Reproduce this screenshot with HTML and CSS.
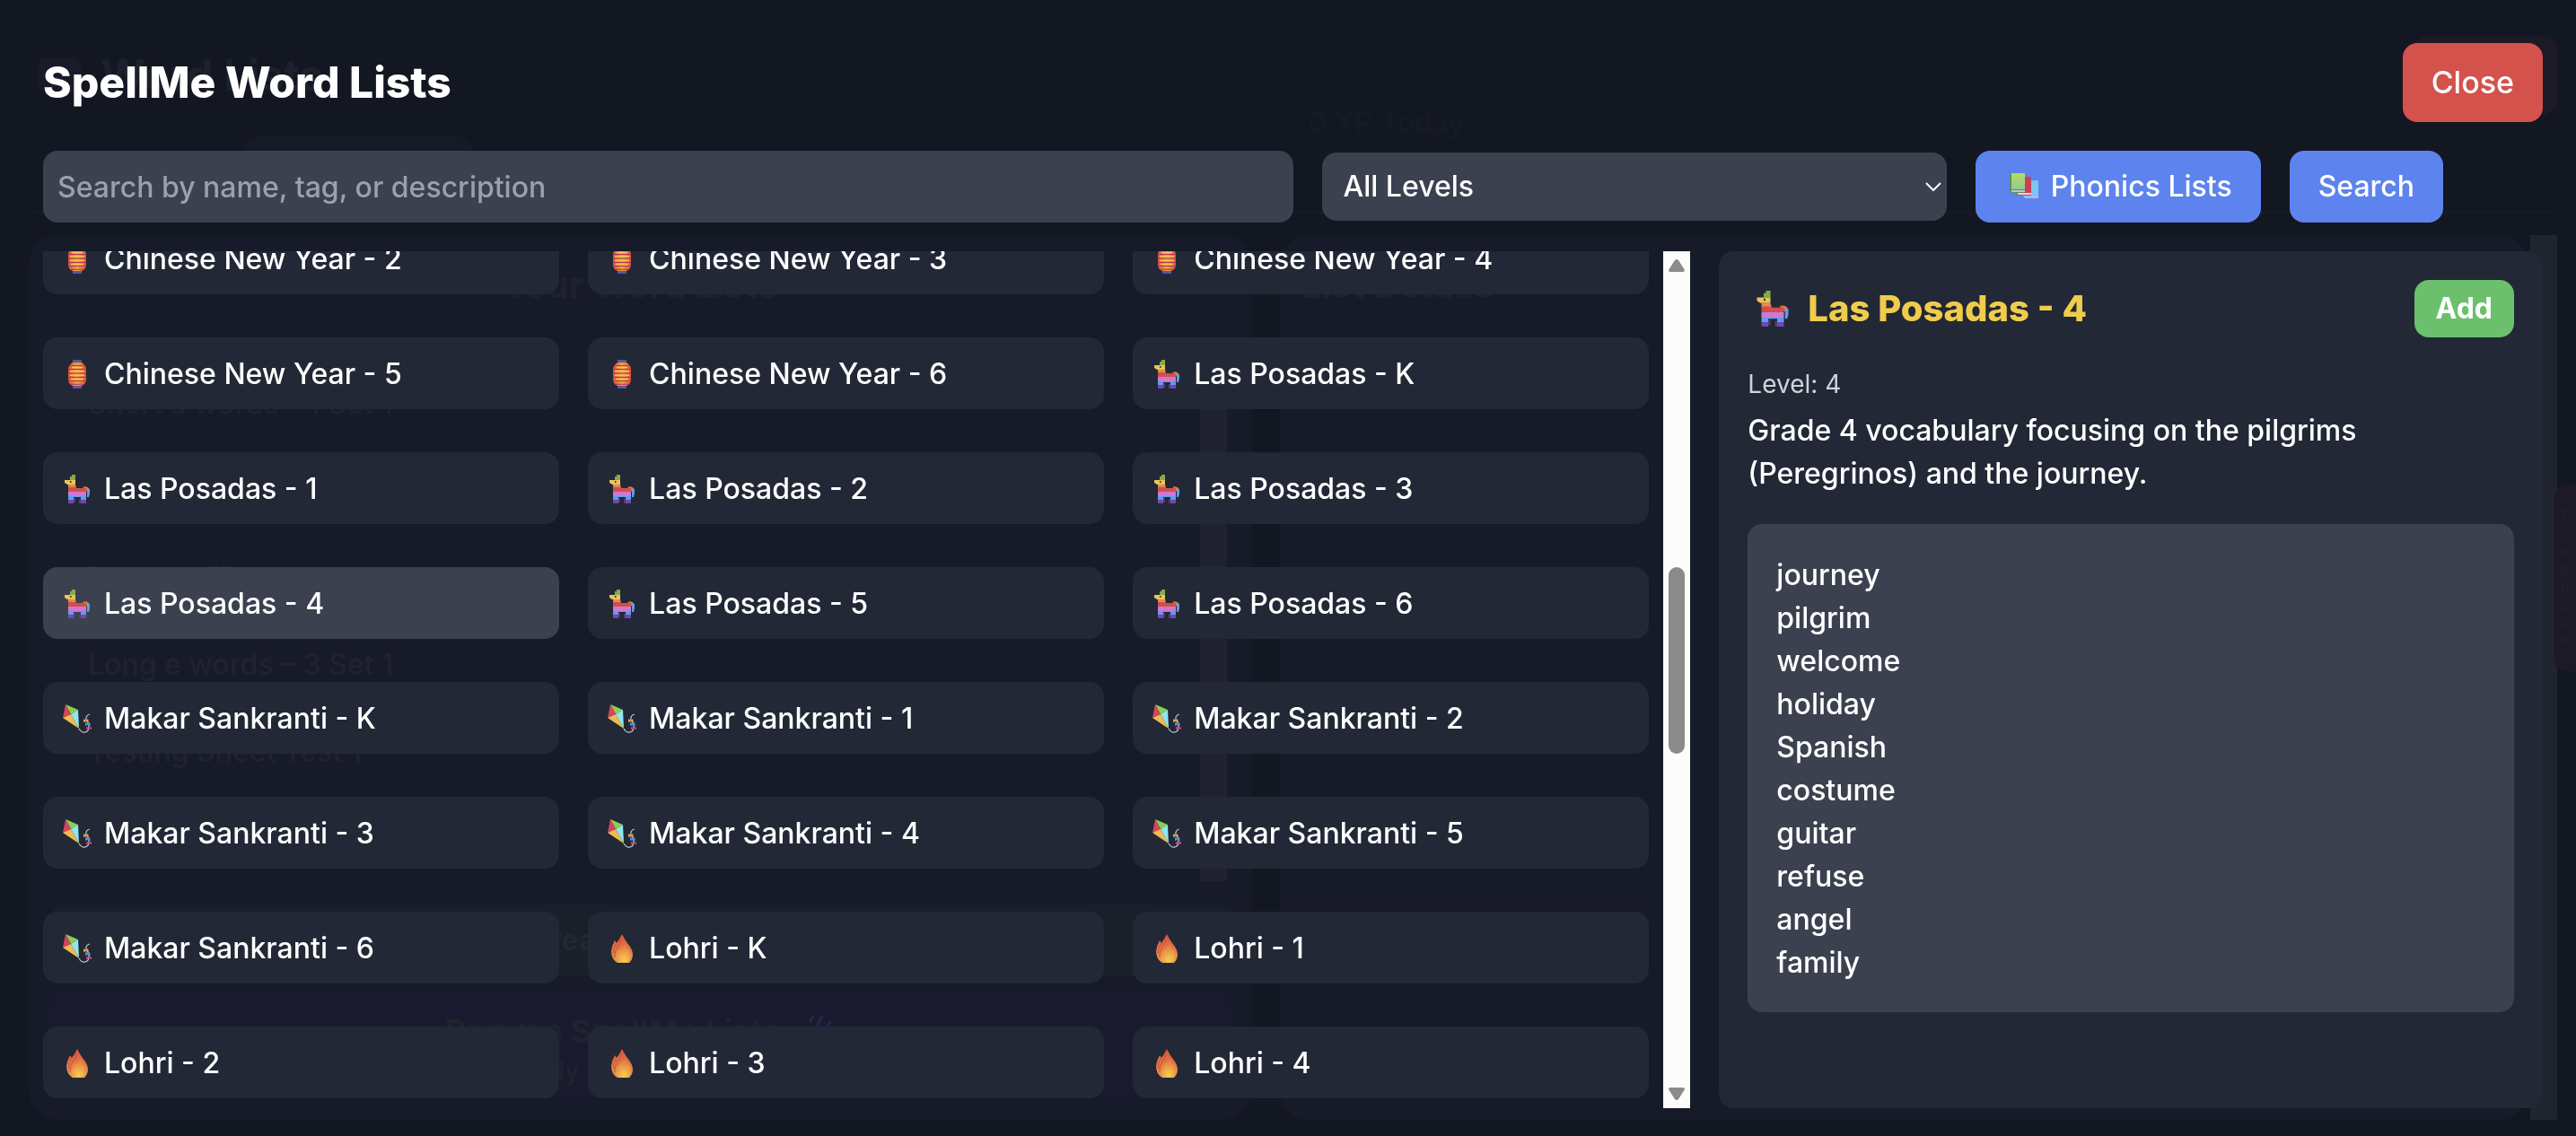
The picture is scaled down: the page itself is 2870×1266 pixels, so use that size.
FILE: index.html
```html
<!DOCTYPE html>
<html lang="en">
<head>
<meta charset="utf-8">
<meta name="viewport" content="width=device-width, initial-scale=1">
<title>SpellMe Word Lists</title>
<link rel="stylesheet" href="styles.css">
</head>
<body>
<svg class="sprite" aria-hidden="true">
  <defs>
    <linearGradient id="g-lantern" x1="0" x2="1" y1="0" y2="0"><stop offset="0" stop-color="#dd5038"/><stop offset=".5" stop-color="#f0a545"/><stop offset="1" stop-color="#dd5038"/></linearGradient>
    <linearGradient id="g-flame" x1="0" x2="0" y1="0" y2="1"><stop offset="0" stop-color="#d9533b"/><stop offset="1" stop-color="#e89c50"/></linearGradient>
    <radialGradient id="g-ember" cx=".55" cy=".85" r=".7"><stop offset="0" stop-color="#f4cf4f"/><stop offset="1" stop-color="#e88445"/></radialGradient>
    <linearGradient id="g-book" x1="0" x2="0" y1="0" y2="1"><stop offset="0" stop-color="#b4dc5e"/><stop offset="1" stop-color="#8fce94"/></linearGradient>
  </defs>
  <symbol id="lantern" viewBox="0 0 32 32">
    <path fill="#5f559c" d="M11 0h10v4H11zM11 28h10v4H11z"/>
    <path fill="url(#g-lantern)" d="M11 3h10q5 3 5 8v11q0 5-5 7H11q-5-2-5-7V11q0-5 5-8z"/>
    <path stroke="#b8365a" stroke-width="1" d="M8 6.500h16M6 10.500h20M6 15h20M6 19.500h20M6 23.500h20M8 27.300h16"/>
    <path stroke="#f6c452" stroke-width="1.500" d="M10 8.500h12M8 12.700h16M8 17.200h16M9 21.500h14"/>
  </symbol>
  <symbol id="pinata" viewBox="0 0 32 32">
    <path fill="#84ab47" d="M8 6V2h2V0h4v6z"/>
    <path fill="#e9c556" d="M2 6h12v5H5l-3-2z"/>
    <path fill="#3a3030" d="M8 7h1.500v2H8z"/>
    <path fill="#e38b4e" d="M6 11h8l1 4H6z"/>
    <path fill="#e07a45" d="M22 14q4-2 7 1l1 4h-3l-2-3z"/>
    <path fill="#d14f4b" d="M6 14h9v1h11v4H6z"/>
    <path fill="#cf78d2" d="M6 19h20v5H6z"/>
    <path fill="#5b9df0" d="M27 16h3v5l-1 4h-2zM6 24h20v4h-6v-3h-8v3H6z"/>
    <path fill="#7048ae" d="M6 28h6v4H6zM20 28h6v4h-6z"/>
    <path fill="#54387f" d="M12 26h2v5h-2zM18 27h2v5h-2z"/>
  </symbol>
  <symbol id="kite" viewBox="0 0 32 32">
    <path fill="#8ccf50" d="M3 0l14 6-8 5z"/>
    <path fill="#d4455c" d="M3 0l6 11-9 4z"/>
    <path fill="#8fe6f3" d="M17 6l1 21L9 11z"/>
    <path fill="#eebb55" d="M9 11l9 16L0 15z"/>
    <path fill="none" stroke="#c9c6d8" stroke-width="1.200" d="M18 27q3 5 7 4t4-6-3-7q-1-6 4-7"/>
    <path fill="#e6a642" d="M23 16l3 2 2-2 1 4-3-1-3 1z"/>
    <path fill="#4f8fe0" d="M25 20l3 1 2-1 1 4-3-1-3 1z"/>
    <path fill="#d6417c" d="M26 25l3 1 3-1v3l-3-1-3 1z"/>
  </symbol>
  <symbol id="flame" viewBox="0 0 32 32">
    <path fill="url(#g-flame)" d="M16 0q3 6 6 10 6 7 6 13 0 5-4 9H11Q4 28 4 19 5 12 8 7l2 3Q13 6 16 0z"/>
    <path fill="none" stroke="#c9523a" d="M10 9q-4 7-4 13M15 5q0 5-4 9-4 6-3 12"/>
    <path fill="url(#g-ember)" d="M19 12q3 3 6 8 2 8-3 12H12Q7 28 10 22q2-5 9-10z"/>
  </symbol>
  <symbol id="books" viewBox="0 0 40 40">
    <path fill="#7ec3f2" d="M21 13h17v18H21z"/><path fill="#b9b3dd" d="M22 31h16v2H23z"/>
    <path fill="#cb3f5b" d="M16 9h14v21H16q-3-1-2-3z"/><path fill="#e4d2e0" d="M15 27h15v2H15z"/>
    <path fill="#5f8f58" d="M6 7l2-2h15v22H8l-2-2z"/><path fill="url(#g-book)" d="M8 5h15v18H8z"/><path fill="#c3c6d3" d="M8 24h15v2H8z"/>
  </symbol>
</svg>

<div class="page" aria-hidden="true">
  <div class="page-header">
    <div class="page-brand"><span class="page-mark"></span><span>Word Lists</span></div>
    <div class="page-tab"></div>
    <div class="page-xp">0 XP Today</div>
    <div class="page-exit"></div>
  </div>
  <div class="page-columns">
    <div class="page-panel page-lists">
      <div class="page-heading">Your Word Lists</div>
      <div class="page-scroller">
        <div class="page-items">
          <span>Short a words – 1 Set 1</span>
          <span>Long e will</span>
          <span>Long e words – 3 Set 1</span>
          <span>Testing Sheet Test 1</span>
        </div>
        <div class="page-track"></div>
      </div>
      <div class="page-create">Create New List</div>
      <div class="page-browse"><strong>Browse SpellMe Lists <svg class="confetti" viewBox="0 0 32 32"><path d="M8 2l-4 8M18 2l-6 12M28 8l-8 10" stroke="#24274a" stroke-width="3"/></svg></strong><span>Ready by School Level</span></div>
    </div>
    <div class="page-panel page-details"><div class="page-heading">List Details</div></div>
    <div class="page-bar"></div>
  </div>
  <div class="feedback">Feedback</div>
</div>

<div class="dialog" role="dialog" aria-modal="true" aria-labelledby="dialog-title">
  <header class="dialog-header">
    <h1 id="dialog-title">SpellMe Word Lists</h1>
    <button class="btn btn-close" type="button">Close</button>
  </header>

  <form class="filters">
    <input class="field search" type="search" aria-label="Search word lists" placeholder="Search by name, tag, or description">
    <div class="select-wrap">
      <select class="field level" aria-label="Level"><option>All Levels</option><option>K</option><option>1</option><option>2</option><option>3</option><option>4</option><option>5</option><option>6</option></select>
      <svg class="chevron" viewBox="0 0 18 10" aria-hidden="true"><path d="M1 1l8 8 8-8" fill="none" stroke="#fff" stroke-width="2"/></svg>
    </div>
    <button class="btn btn-blue" type="button"><svg class="books" aria-hidden="true"><use href="#books"/></svg>Phonics Lists</button>
    <button class="btn btn-blue" type="button">Search</button>
  </form>

  <main class="content">
    <div class="browser">
      <div class="viewport">
        <div class="cards">
          <button class="card" type="button"><svg class="icon"><use href="#lantern"/></svg>Chinese New Year - 2</button>
          <button class="card" type="button"><svg class="icon"><use href="#lantern"/></svg>Chinese New Year - 3</button>
          <button class="card" type="button"><svg class="icon"><use href="#lantern"/></svg>Chinese New Year - 4</button>
          <button class="card" type="button"><svg class="icon"><use href="#lantern"/></svg>Chinese New Year - 5</button>
          <button class="card" type="button"><svg class="icon"><use href="#lantern"/></svg>Chinese New Year - 6</button>
          <button class="card" type="button"><svg class="icon"><use href="#pinata"/></svg>Las Posadas - K</button>
          <button class="card" type="button"><svg class="icon"><use href="#pinata"/></svg>Las Posadas - 1</button>
          <button class="card" type="button"><svg class="icon"><use href="#pinata"/></svg>Las Posadas - 2</button>
          <button class="card" type="button"><svg class="icon"><use href="#pinata"/></svg>Las Posadas - 3</button>
          <button class="card selected" type="button" aria-pressed="true"><svg class="icon"><use href="#pinata"/></svg>Las Posadas - 4</button>
          <button class="card" type="button"><svg class="icon"><use href="#pinata"/></svg>Las Posadas - 5</button>
          <button class="card" type="button"><svg class="icon"><use href="#pinata"/></svg>Las Posadas - 6</button>
          <button class="card" type="button"><svg class="icon"><use href="#kite"/></svg>Makar Sankranti - K</button>
          <button class="card" type="button"><svg class="icon"><use href="#kite"/></svg>Makar Sankranti - 1</button>
          <button class="card" type="button"><svg class="icon"><use href="#kite"/></svg>Makar Sankranti - 2</button>
          <button class="card" type="button"><svg class="icon"><use href="#kite"/></svg>Makar Sankranti - 3</button>
          <button class="card" type="button"><svg class="icon"><use href="#kite"/></svg>Makar Sankranti - 4</button>
          <button class="card" type="button"><svg class="icon"><use href="#kite"/></svg>Makar Sankranti - 5</button>
          <button class="card" type="button"><svg class="icon"><use href="#kite"/></svg>Makar Sankranti - 6</button>
          <button class="card" type="button"><svg class="icon"><use href="#flame"/></svg>Lohri - K</button>
          <button class="card" type="button"><svg class="icon"><use href="#flame"/></svg>Lohri - 1</button>
          <button class="card" type="button"><svg class="icon"><use href="#flame"/></svg>Lohri - 2</button>
          <button class="card" type="button"><svg class="icon"><use href="#flame"/></svg>Lohri - 3</button>
          <button class="card" type="button"><svg class="icon"><use href="#flame"/></svg>Lohri - 4</button>
        </div>
      </div>
      <div class="scrollbar" aria-hidden="true">
        <svg class="arrow" viewBox="0 0 18 14"><path d="M9 0q1 0 2 1l7 11q0 2-2 2H2q-2 0-2-2L7 1q1-1 2-1z"/></svg>
        <span class="track-before"></span>
        <span class="thumb"></span>
        <span class="track-after"></span>
        <svg class="arrow" viewBox="0 0 18 14"><path d="M9 14q1 0 2-1l7-11q0-2-2-2H2q-2 0-2 2l7 11q1 1 2 1z"/></svg>
      </div>
    </div>

    <section class="detail" aria-labelledby="detail-title">
      <div class="detail-header">
        <svg class="icon-large" aria-hidden="true"><use href="#pinata"/></svg>
        <h2 id="detail-title">Las Posadas - 4</h2>
        <button class="btn btn-add" type="button">Add</button>
      </div>
      <p class="detail-level">Level: 4</p>
      <p class="detail-text">Grade 4 vocabulary focusing on the pilgrims (Peregrinos) and the journey.</p>
      <ul class="words">
        <li>journey</li><li>pilgrim</li><li>welcome</li><li>holiday</li><li>Spanish</li>
        <li>costume</li><li>guitar</li><li>refuse</li><li>angel</li><li>family</li>
      </ul>
    </section>
  </main>
</div>
</body>
</html>
```
FILE: styles.css
```css
* { box-sizing: border-box; }

body {
  margin: 0;
  background: #131722;
  color: #fff;
  font-family: Inter, "Open Sans", sans-serif;
  font-size: 32px;
  line-height: 48px;
  font-weight: 500;
}

button, input, select { font: inherit; color: inherit; border: 0; margin: 0; }
h1, h2, p, ul { margin: 0; padding: 0; }
ul { list-style: none; }
.sprite { position: absolute; width: 0; height: 0; }

/* Page that shows faintly behind the dialog */
.page {
  height: 100vh;
  padding: 0 21px 18px 32px;
  display: flex;
  flex-direction: column;
  color: #20232e;
  overflow: hidden;
}
.page-header {
  height: 238px;
  flex: none;
  display: grid;
  grid-template-columns: 1fr 1fr 1fr;
  align-content: space-between;
  padding-top: 40px;
  border-bottom: 2px solid #171b27;
}
.page-brand { display: flex; gap: 22px; align-items: center; grid-area: 1 / 1; height: 88px; font-size: 48px; font-weight: 700; color: #1d212c; }
.page-mark { width: 48px; height: 38px; margin-left: 10px; border-radius: 8px; background: #1a1b28; }
.page-exit { grid-area: 1 / 3; justify-self: end; width: 160px; height: 88px; border-radius: 16px; background: #1e1a25; }
.page-tab { grid-area: 2 / 1; width: 256px; height: 84px; margin-left: 238px; border-radius: 16px; background: #161927; }
.page-xp { grid-area: 1 / 2 / 3 / 3; justify-self: center; margin-left: 208px; padding-top: 73px; color: #151a26; }
.page-columns { flex: 1; min-height: 0; margin-top: 24px; display: flex; }
.page-panel { border-radius: 32px; background: #171a28; }
.page-lists { flex: 1361 1 0; display: flex; flex-direction: column; padding: 32px 24px 24px; margin-right: 32px; }
.page-details { flex: 1391 1 0; margin-right: 3px; padding: 32px 24px; }
.page-heading { font-size: 40px; font-weight: 700; text-align: center; color: #1f222c; }
.page-details .page-heading { text-align: left; }
.page-bar { width: 30px; background: #20242e; }
.page-scroller { flex: 1; min-height: 0; display: flex; justify-content: space-between; margin: 40px 0 26px; padding-right: 3px; }
.page-items { display: flex; flex-direction: column; gap: 49px; padding: 44px 42px 0; overflow: hidden; }
.page-items span { flex: none; }
.page-items span:nth-child(2) { margin-top: 97px; }
.page-track { width: 30px; background: #20232f; }
.page-create { height: 80px; flex: none; padding: 16px; border-radius: 16px; background: #19202a; color: #202830; text-align: center; font-weight: 700; }
.page-browse { height: 121px; flex: none; display: flex; flex-direction: column; align-items: center; margin-top: 15px; padding-top: 22px; border-radius: 16px; background: #1a1a2f; font-size: 28px; line-height: 40px; }
.page-browse strong { font-size: 36px; line-height: 48px; }
.confetti { width: 32px; height: 32px; margin-left: 20px; }
.feedback { position: absolute; right: 0; top: 540px; width: 25px; padding: 24px 0; border-radius: 16px 0 0 16px; background: #1e1a25; color: #1a202c; font-size: 16px; line-height: 25px; font-weight: 700; writing-mode: vertical-rl; text-orientation: upright; }

/* Dialog */
.dialog {
  position: fixed;
  inset: 0;
  display: flex;
  flex-direction: column;
  gap: 32px;
  padding: 48px 37px 31px 48px;
}
.dialog-header { display: flex; align-items: center; justify-content: space-between; }
h1 { font-size: 48px; line-height: 64px; font-weight: 800; }

.btn { border-radius: 16px; padding: 16px 32px; display: flex; align-items: center; justify-content: center; cursor: pointer; }
.btn-close { background: #d3524b; font-size: 34px; line-height: 56px; }
.btn-blue { background: #5d83ee; gap: 12px; white-space: nowrap; }
.btn-add { background: #6cc06d; padding: 8px 24px; font-weight: 700; margin-left: auto; }
.books { width: 40px; height: 40px; }

.filters { display: flex; align-items: center; gap: 32px; }
.field { display: block; width: 100%; border-radius: 16px; background: #3c4150; appearance: none; outline: none; }
.search { width: 50%; height: 80px; padding: 16px; }
.search::placeholder { color: #9ca0ab; opacity: 1; }
.select-wrap { width: 25%; display: grid; align-items: center; }
.level { grid-area: 1 / 1; height: 76px; padding: 12px 24px; }
.chevron { grid-area: 1 / 1; justify-self: end; width: 18px; height: 10px; margin-right: 6px; pointer-events: none; }

.content { flex: 1; min-height: 0; display: grid; grid-template-columns: 2fr 1fr; grid-template-rows: 100%; gap: 32px; }
.browser { display: flex; gap: 16px; min-width: 0; }
.viewport { flex: 1; overflow: hidden; }
.cards { display: grid; grid-template-columns: repeat(3, 1fr); gap: 48px 32px; margin-top: -32px; }
.card { display: flex; align-items: center; gap: 14px; height: 80px; padding: 2px 22px 0; border-radius: 16px; background: #222835; text-align: left; cursor: pointer; }
.card.selected { background: #3c4150; }
.icon { width: 32px; height: 32px; flex: none; }

.scrollbar { width: 30px; padding: 9px 6px; display: flex; flex-direction: column; background: #fcfcfc; }
.arrow { width: 18px; height: 14px; flex: none; fill: #8b8b8b; }
.track-before { flex: 329; }
.thumb { flex: 208; border-radius: 9px; background: #8b8b8b; }
.track-after { flex: 372; }

.detail { padding: 32px; border-radius: 16px; background: #222835; }
.detail-header { display: flex; align-items: center; margin-bottom: 32px; padding-left: 8px; }
.icon-large { width: 40px; height: 40px; margin-right: 19px; }
h2 { font-size: 40px; line-height: 56px; font-weight: 800; color: #efcc4c; }
.detail-level { font-size: 28px; line-height: 40px; margin-bottom: 8px; color: #d0d3da; font-weight: 400; }
.detail-text { margin-bottom: 32px; }
.words { padding: 33px 32px 31px; border-radius: 16px; background: #3c4150; }
```
